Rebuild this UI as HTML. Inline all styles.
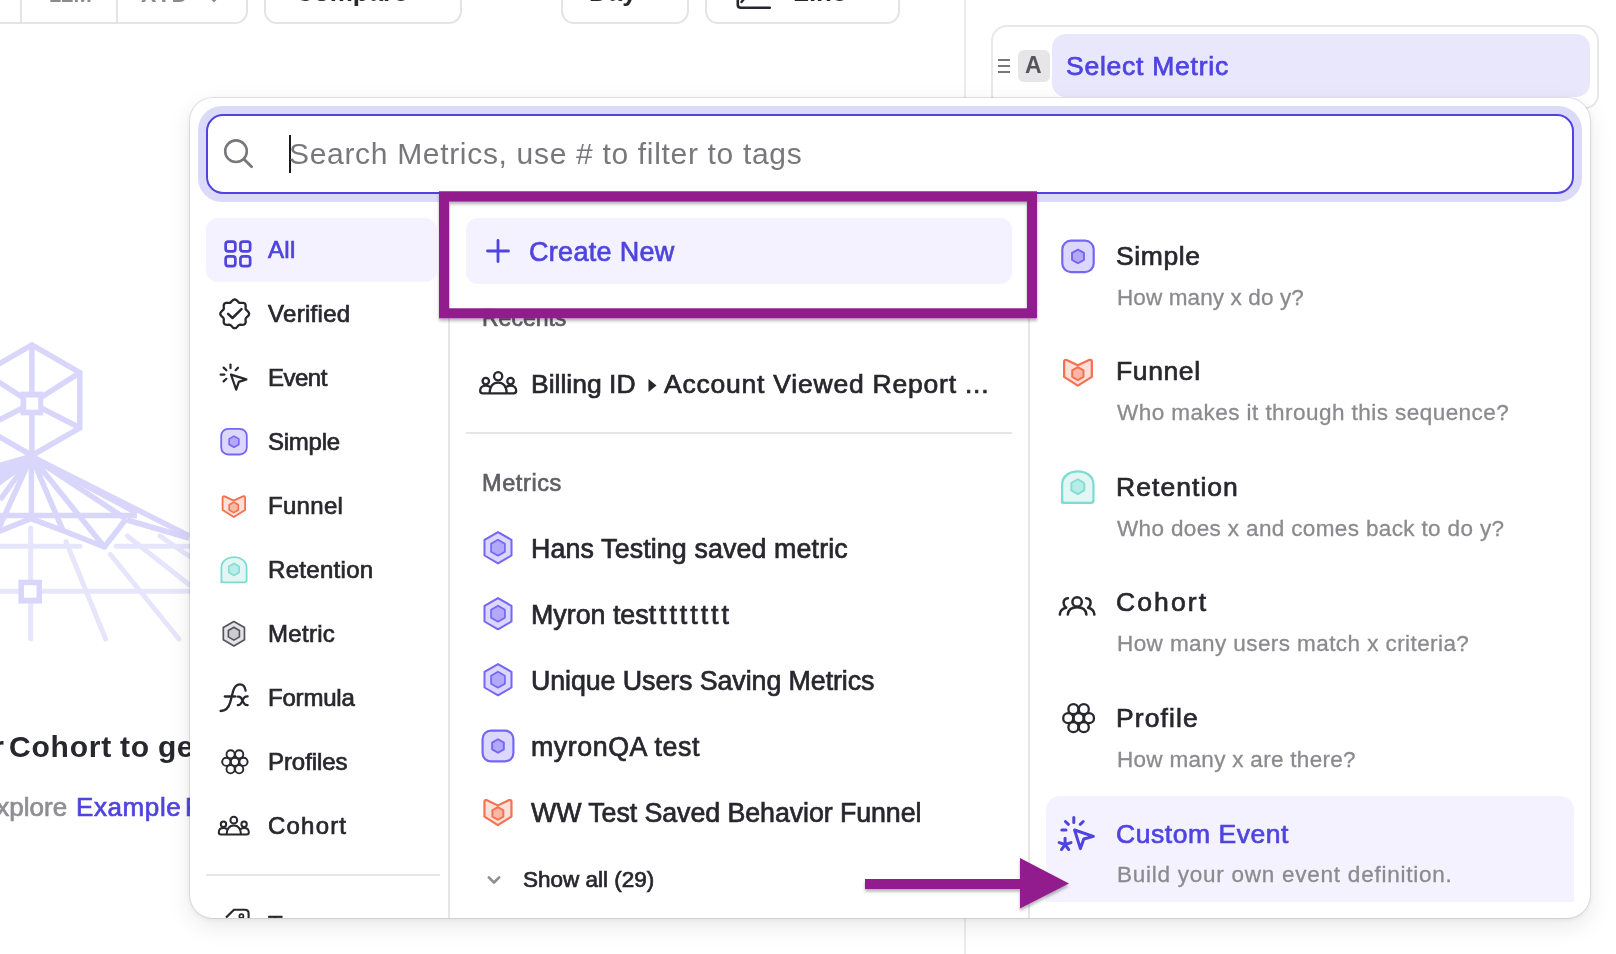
<!DOCTYPE html>
<html><head><meta charset="utf-8">
<style>
html,body{margin:0;padding:0;}
body{width:1616px;height:954px;overflow:hidden;position:relative;background:#ffffff;font-family:"Liberation Sans",sans-serif;}
.t{position:absolute;line-height:1;white-space:nowrap;will-change:transform;}
.m{-webkit-text-stroke:0.7px currentColor;}
.d{-webkit-text-stroke:0.3px currentColor;}
.abs{position:absolute;}
svg{position:absolute;left:0;top:0;overflow:visible;}
</style></head><body>

<div class="abs" style="position:absolute;border:2px solid #e4e4e6;background:#fff;box-sizing:border-box;left:-20px;top:-40px;width:268px;height:64px;border-radius:0 0 13px 13px;border-top:none;"></div>
<div class="abs" style="left:20px;top:0;width:2px;height:23px;background:#e4e4e6"></div>
<div class="abs" style="left:116px;top:0;width:2px;height:23px;background:#e4e4e6"></div>
<div class="abs" style="position:absolute;border:2px solid #e4e4e6;background:#fff;box-sizing:border-box;left:264px;top:-40px;width:198px;height:64px;border-radius:13px;"></div>
<div class="abs" style="position:absolute;border:2px solid #e4e4e6;background:#fff;box-sizing:border-box;left:561px;top:-40px;width:128px;height:64px;border-radius:13px;"></div>
<div class="abs" style="position:absolute;border:2px solid #e4e4e6;background:#fff;box-sizing:border-box;left:705px;top:-40px;width:195px;height:64px;border-radius:13px;"></div>
<div class="t" style="left:49.0px;top:-16.2px;font-size:22px;color:#8a8a8f;font-weight:700;">12M</div>
<div class="t" style="left:141.0px;top:-17.1px;font-size:23px;color:#8a8a8f;font-weight:700;letter-spacing:0.5px;">XTD</div>
<div class="t" style="left:295.0px;top:-21.5px;font-size:26px;color:#27272e;font-weight:700;">Compare</div>
<div class="t" style="left:589.0px;top:-21.5px;font-size:26px;color:#27272e;font-weight:700;">Day</div>
<div class="t" style="left:793.0px;top:-21.5px;font-size:26px;color:#27272e;font-weight:700;">Line</div>
<svg width="1616" height="954"><path d="M737.8,-4 V4.8 Q737.8,7.8 740.8,7.8 H769.8" fill="none" stroke="#27272e" stroke-width="2.6" stroke-linecap="round"/><line x1="741.5" y1="2" x2="744" y2="-1" stroke="#27272e" stroke-width="2.4" stroke-linecap="round"/><polyline points="211,-2 214,1 217,-2" fill="none" stroke="#8a8a8f" stroke-width="2"/></svg>
<div class="abs" style="left:964px;top:0;width:2px;height:954px;background:#ececee"></div>
<div class="abs" style="left:991px;top:25px;width:608px;height:84px;border:2px solid #e8e8ea;border-radius:16px 16px 14px 14px;box-sizing:border-box;background:#fff;"></div>
<div class="abs" style="left:1052px;top:34px;width:538px;height:63px;border-radius:14px;background:#e9e7fc;"></div>
<div class="abs" style="left:998px;top:59px;width:12px;height:2px;background:#77777c"></div><div class="abs" style="left:998px;top:65px;width:12px;height:2px;background:#77777c"></div><div class="abs" style="left:998px;top:71px;width:12px;height:2px;background:#77777c"></div>
<div class="abs" style="left:1018px;top:50px;width:32px;height:32px;border-radius:6px;background:#e6e6e8;"></div>
<div class="t" style="left:1024.5px;top:54.0px;font-size:23px;color:#55555a;font-weight:700;">A</div>
<div class="t" style="left:1066.0px;top:52.6px;font-size:26.5px;color:#4f44e0;font-weight:400;letter-spacing:0.75px;-webkit-text-stroke:0.75px currentColor;">Select Metric</div>
<svg width="1616" height="954" viewBox="0 0 1616 954"><polygon points="31.9,344.9 79.8,372.6 79.8,427.8 31.9,455.5 -16.0,427.8 -16.0,372.5" fill="none" stroke="#d9d6fb" stroke-width="5.5" stroke-linejoin="miter"/><line x1="31.9" y1="403.2" x2="31.9" y2="344.9" stroke="#d9d6fb" stroke-width="5.5"/><line x1="31.9" y1="403.2" x2="79.8" y2="372.6" stroke="#d9d6fb" stroke-width="5.5"/><line x1="31.9" y1="403.2" x2="79.8" y2="427.8" stroke="#d9d6fb" stroke-width="5.5"/><line x1="31.9" y1="403.2" x2="31.9" y2="455.5" stroke="#d9d6fb" stroke-width="5.5"/><line x1="31.9" y1="403.2" x2="-16.0" y2="427.8" stroke="#d9d6fb" stroke-width="5.5"/><line x1="31.9" y1="403.2" x2="-16.0" y2="372.5" stroke="#d9d6fb" stroke-width="5.5"/><rect x="20.5" y="391.6" width="22.7" height="23.8" fill="#d9d6fb"/><rect x="26.2" y="397.6" width="12" height="12" fill="#fff"/><line x1="31.4" y1="456.5" x2="188.7" y2="535.6" stroke="#d9d6fb" stroke-width="5.5"/><line x1="31.4" y1="456.5" x2="137" y2="513" stroke="#d9d6fb" stroke-width="5.5"/><line x1="31.4" y1="456.5" x2="126" y2="519" stroke="#d9d6fb" stroke-width="5.5"/><line x1="31.4" y1="456.5" x2="104.4" y2="547" stroke="#d9d6fb" stroke-width="5.5"/><line x1="31.4" y1="456.5" x2="63" y2="530.6" stroke="#d9d6fb" stroke-width="5.5"/><line x1="31.4" y1="456.5" x2="31.4" y2="515.5" stroke="#d9d6fb" stroke-width="5.5"/><line x1="31.4" y1="456.5" x2="-2" y2="530" stroke="#d9d6fb" stroke-width="5.5"/><line x1="31.4" y1="456.5" x2="0" y2="500" stroke="#d9d6fb" stroke-width="5.5"/><polygon points="31.4,453.5 35.4,459.5 -2,487 -2,463" fill="#d9d6fb"/><line x1="0" y1="515.5" x2="137" y2="515.5" stroke="#d9d6fb" stroke-width="5.5"/><polyline points="-5,533 30.8,518.6 63,530.6 104.4,547 126,519" fill="none" stroke="#d9d6fb" stroke-width="5.5" stroke-linejoin="round"/><line x1="127" y1="520" x2="189" y2="538" stroke="#d9d6fb" stroke-width="5.5"/><line x1="0" y1="546.3" x2="80" y2="546.3" stroke="#e7e5fc" stroke-width="5" stroke-linecap="round"/><line x1="116" y1="546.3" x2="189" y2="546.3" stroke="#e7e5fc" stroke-width="5" stroke-linecap="round"/><line x1="0" y1="591.3" x2="189" y2="591.3" stroke="#e7e5fc" stroke-width="5" stroke-linecap="round"/><line x1="30.7" y1="528" x2="30.7" y2="639" stroke="#e7e5fc" stroke-width="5" stroke-linecap="round"/><line x1="66" y1="541.6" x2="105.6" y2="639" stroke="#e7e5fc" stroke-width="5" stroke-linecap="round"/><line x1="110.4" y1="554.5" x2="179" y2="639" stroke="#e7e5fc" stroke-width="5" stroke-linecap="round"/><line x1="127.4" y1="536" x2="189" y2="584.5" stroke="#e7e5fc" stroke-width="5" stroke-linecap="round"/><line x1="160" y1="536" x2="189" y2="556" stroke="#e7e5fc" stroke-width="5" stroke-linecap="round"/><rect x="18.4" y="579.7" width="23.6" height="23.9" fill="#d9d6fb"/><rect x="24" y="585.2" width="12.5" height="12.5" fill="#fff"/></svg>
<div class="t" style="left:-26.0px;top:732.3px;font-size:30px;color:#27272e;font-weight:700;">or</div>
<div class="t" style="left:9.0px;top:732.3px;font-size:30px;color:#27272e;font-weight:700;letter-spacing:0.8px;">Cohort</div>
<div class="t" style="left:120.0px;top:732.3px;font-size:30px;color:#27272e;font-weight:700;letter-spacing:0.8px;">to</div>
<div class="t" style="left:158.0px;top:732.3px;font-size:30px;color:#27272e;font-weight:700;letter-spacing:0.5px;">get</div>
<div class="t m" style="left:-21.0px;top:794.0px;font-size:26px;color:#8e8e93;font-weight:400;">Explore</div>
<div class="t m" style="left:75.5px;top:794.0px;font-size:26px;color:#4f44e0;font-weight:400;letter-spacing:0.6px;">Example</div>
<div class="t m" style="left:185.0px;top:794.0px;font-size:26px;color:#4f44e0;font-weight:400;">Reports</div>
<div class="abs" style="left:190px;top:98px;width:1400px;height:820px;border-radius:23px;background:#fff;box-shadow:0 0 0 1px rgba(0,0,0,0.09),0 1px 6px rgba(0,0,0,0.08),0 8px 24px rgba(0,0,0,0.09);overflow:hidden;">
<div class="abs" style="left:8px;top:8px;width:1384px;height:96px;border-radius:24px;background:#dcdaf9;"></div>
<div class="abs" style="left:16px;top:16px;width:1368px;height:80px;border-radius:17px;background:#fff;border:2px solid #4f44e0;box-sizing:border-box;"></div>
<div class="abs" style="left:99px;top:37px;width:2px;height:38px;background:#1a1a1a;"></div>
<div class="t" style="left:98.5px;top:41.3px;font-size:30px;color:#77777c;font-weight:400;letter-spacing:0.68px;">Search Metrics, use # to filter to tags</div>
<div class="abs" style="left:16px;top:120px;width:231px;height:64px;border-radius:12px;background:#f3f2fe;"></div>
<div class="t m" style="left:77.5px;top:140.0px;font-size:24px;color:#4f44e0;font-weight:400;letter-spacing:0.3px;">All</div>
<div class="t m" style="left:77.5px;top:204.0px;font-size:24px;color:#27272e;font-weight:400;letter-spacing:0.3px;">Verified</div>
<div class="t m" style="left:77.5px;top:268.0px;font-size:24px;color:#27272e;font-weight:400;letter-spacing:-0.5px;">Event</div>
<div class="t m" style="left:77.5px;top:332.0px;font-size:24px;color:#27272e;font-weight:400;letter-spacing:-0.25px;">Simple</div>
<div class="t m" style="left:77.5px;top:396.0px;font-size:24px;color:#27272e;font-weight:400;letter-spacing:0.3px;">Funnel</div>
<div class="t m" style="left:77.5px;top:460.0px;font-size:24px;color:#27272e;font-weight:400;letter-spacing:0.3px;">Retention</div>
<div class="t m" style="left:77.5px;top:524.0px;font-size:24px;color:#27272e;font-weight:400;letter-spacing:0.3px;">Metric</div>
<div class="t m" style="left:77.5px;top:588.0px;font-size:24px;color:#27272e;font-weight:400;letter-spacing:-0.2px;">Formula</div>
<div class="t m" style="left:77.5px;top:652.0px;font-size:24px;color:#27272e;font-weight:400;letter-spacing:-0.07px;">Profiles</div>
<div class="t m" style="left:77.5px;top:716.0px;font-size:24px;color:#27272e;font-weight:400;letter-spacing:1.2px;">Cohort</div>
<div class="t m" style="left:77.5px;top:814.7px;font-size:24px;color:#27272e;font-weight:400;">Tags</div>
<div class="abs" style="left:16px;top:776px;width:234px;height:2px;background:#e6e6e8;"></div>
<div class="abs" style="left:258px;top:106px;width:2px;height:820px;background:#e6e6e8;"></div>
<div class="abs" style="left:276px;top:120px;width:546px;height:66px;border-radius:12px;background:#f3f2fe;"></div>
<div class="t m" style="left:339.0px;top:140.8px;font-size:27px;color:#4f44e0;font-weight:400;letter-spacing:0.3px;">Create New</div>
<div class="t m" style="left:292.0px;top:208.8px;font-size:23px;color:#5f5f66;font-weight:400;">Recents</div>
<div class="t m" style="left:341.0px;top:273.0px;font-size:26.5px;color:#27272e;font-weight:400;">Billing ID</div>
<div class="t m" style="left:474.0px;top:273.0px;font-size:26.5px;color:#27272e;font-weight:400;letter-spacing:0.78px;">Account Viewed Report ...</div>
<div class="abs" style="left:276px;top:334px;width:546px;height:2px;background:#e6e6e8;"></div>
<div class="t m" style="left:292.0px;top:373.6px;font-size:23.5px;color:#5f5f66;font-weight:400;letter-spacing:0.6px;">Metrics</div>
<div class="t m" style="left:341.0px;top:437.9px;font-size:26.8px;color:#27272e;font-weight:400;letter-spacing:0.12px;">Hans Testing saved metric</div>
<div class="t m" style="left:341.0px;top:503.8px;font-size:26.8px;color:#27272e;font-weight:400;letter-spacing:0px;">Myron tes<span style="letter-spacing:2.95px">tttttttt</span></div>
<div class="t m" style="left:341.0px;top:569.7px;font-size:26.8px;color:#27272e;font-weight:400;letter-spacing:-0.08px;">Unique Users Saving Metrics</div>
<div class="t m" style="left:341.0px;top:635.6px;font-size:26.8px;color:#27272e;font-weight:400;letter-spacing:0.55px;">myronQA test</div>
<div class="t m" style="left:341.0px;top:701.5px;font-size:26.8px;color:#27272e;font-weight:400;letter-spacing:-0.08px;">WW Test Saved Behavior Funnel</div>
<div class="t m" style="left:333.0px;top:771.2px;font-size:22.5px;color:#27272e;font-weight:400;">Show all (29)</div>
<div class="abs" style="left:838px;top:106px;width:2px;height:820px;background:#e6e6e8;"></div>
<div class="abs" style="left:856px;top:698px;width:528px;height:106px;border-radius:14px 14px 0 0;background:#f3f2fe;"></div>
<div class="t m" style="left:926.0px;top:144.7px;font-size:26.5px;color:#27272e;font-weight:400;letter-spacing:0.6px;">Simple</div>
<div class="t d" style="left:927.0px;top:188.5px;font-size:22.5px;color:#8a8a8f;font-weight:400;letter-spacing:0.12px;">How many x do y?</div>
<div class="t m" style="left:926.0px;top:260.2px;font-size:26.5px;color:#27272e;font-weight:400;letter-spacing:0.6px;">Funnel</div>
<div class="t d" style="left:927.0px;top:304.1px;font-size:22.5px;color:#8a8a8f;font-weight:400;letter-spacing:0.45px;">Who makes it through this sequence?</div>
<div class="t m" style="left:926.0px;top:375.8px;font-size:26.5px;color:#27272e;font-weight:400;letter-spacing:1.05px;">Retention</div>
<div class="t d" style="left:927.0px;top:419.7px;font-size:22.5px;color:#8a8a8f;font-weight:400;letter-spacing:0.36px;">Who does x and comes back to do y?</div>
<div class="t m" style="left:926.0px;top:491.4px;font-size:26.5px;color:#27272e;font-weight:400;letter-spacing:2.1px;">Cohort</div>
<div class="t d" style="left:927.0px;top:535.3px;font-size:22.5px;color:#8a8a8f;font-weight:400;letter-spacing:0.42px;">How many users match x criteria?</div>
<div class="t m" style="left:926.0px;top:607.0px;font-size:26.5px;color:#27272e;font-weight:400;letter-spacing:1.1px;">Profile</div>
<div class="t d" style="left:927.0px;top:650.9px;font-size:22.5px;color:#8a8a8f;font-weight:400;letter-spacing:0.3px;">How many x are there?</div>
<div class="t m" style="left:926.0px;top:722.6px;font-size:26.5px;color:#4f44e0;font-weight:400;letter-spacing:0.55px;">Custom Event</div>
<div class="t d" style="left:927.0px;top:766.4px;font-size:22.5px;color:#8a8a8f;font-weight:400;letter-spacing:0.75px;">Build your own event definition.</div>
<svg width="1400" height="820" viewBox="190 98 1400 820" style="left:0;top:0"><circle cx="236" cy="151.2" r="10.8" fill="none" stroke="#77777c" stroke-width="2.6"/><line x1="244" y1="159.2" x2="251.6" y2="166.8" stroke="#77777c" stroke-width="2.8" stroke-linecap="round"/><rect x="225.65" y="241.65" width="9.7" height="9.7" rx="2.6" fill="none" stroke="#4f44e0" stroke-width="2.7"/><rect x="225.65" y="256.45" width="9.7" height="9.7" rx="2.6" fill="none" stroke="#4f44e0" stroke-width="2.7"/><rect x="240.45" y="241.65" width="9.7" height="9.7" rx="2.6" fill="none" stroke="#4f44e0" stroke-width="2.7"/><rect x="240.45" y="256.45" width="9.7" height="9.7" rx="2.6" fill="none" stroke="#4f44e0" stroke-width="2.7"/><path d="M234.70,299.35 L236.08,299.78 L237.28,300.85 L238.28,302.01 L239.27,302.76 L240.51,302.94 L242.03,302.82 L243.63,302.91 L244.92,303.58 L245.59,304.87 L245.68,306.47 L245.56,307.99 L245.74,309.23 L246.49,310.22 L247.65,311.22 L248.72,312.42 L249.15,313.80 L248.72,315.18 L247.65,316.38 L246.49,317.38 L245.74,318.37 L245.56,319.61 L245.68,321.13 L245.59,322.73 L244.92,324.02 L243.63,324.69 L242.03,324.78 L240.51,324.66 L239.27,324.84 L238.28,325.59 L237.28,326.75 L236.08,327.82 L234.70,328.25 L233.32,327.82 L232.12,326.75 L231.12,325.59 L230.13,324.84 L228.89,324.66 L227.37,324.78 L225.77,324.69 L224.48,324.02 L223.81,322.73 L223.72,321.13 L223.84,319.61 L223.66,318.37 L222.91,317.38 L221.75,316.38 L220.68,315.18 L220.25,313.80 L220.68,312.42 L221.75,311.22 L222.91,310.22 L223.66,309.23 L223.84,307.99 L223.72,306.47 L223.81,304.87 L224.48,303.58 L225.77,302.91 L227.37,302.82 L228.89,302.94 L230.13,302.76 L231.12,302.01 L232.12,300.85 L233.32,299.78 L234.70,299.35 Z" fill="none" stroke="#27272e" stroke-width="2.3" stroke-linejoin="round"/><path d="M228.10,313.80 L232.50,318.00 L241.50,309.20" fill="none" stroke="#27272e" stroke-width="2.5" stroke-linecap="round" stroke-linejoin="round"/><path d="M231.00,374.60 L246.40,379.40 L238.80,381.90 L236.20,389.60 Z" fill="none" stroke="#27272e" stroke-width="2.2" stroke-linejoin="round"/><line x1="230.50" y1="364.60" x2="230.50" y2="368.20" stroke="#27272e" stroke-width="2.2" stroke-linecap="round"/><line x1="223.60" y1="367.60" x2="226.40" y2="370.30" stroke="#27272e" stroke-width="2.2" stroke-linecap="round"/><line x1="238.00" y1="367.70" x2="235.60" y2="370.20" stroke="#27272e" stroke-width="2.2" stroke-linecap="round"/><line x1="220.60" y1="374.60" x2="224.40" y2="374.60" stroke="#27272e" stroke-width="2.2" stroke-linecap="round"/><line x1="226.40" y1="378.80" x2="223.60" y2="381.40" stroke="#27272e" stroke-width="2.2" stroke-linecap="round"/><rect x="221.20" y="428.90" width="25.60" height="25.60" rx="7.00" fill="#dcd8fd" stroke="#7566f5" stroke-width="1.80"/><polygon points="234.00,436.10 238.85,438.90 238.85,444.50 234.00,447.30 229.15,444.50 229.15,438.90" fill="#b3a8f9" stroke="#7566f5" stroke-width="1.60" stroke-linejoin="round"/><path d="M222.61,497.63 Q222.61,495.81 224.64,496.31 L233.75,500.67 L242.86,496.31 Q245.09,495.81 245.09,497.63 L245.09,509.98 L233.75,517.06 L222.61,509.98 Z" fill="#fde0d9" stroke="#f4714f" stroke-width="1.82" stroke-linejoin="round"/><polygon points="233.75,502.08 238.31,504.72 238.31,509.98 233.75,512.61 229.19,509.98 229.19,504.72" fill="#fbb7a6" stroke="#f4714f" stroke-width="1.62" stroke-linejoin="round"/><path d="M221.40,582.40 L221.40,567.80 C221.40,560.80 227.50,557.20 234.00,557.20 C240.50,557.20 246.60,560.80 246.60,567.80 L246.60,580.30 Q246.60,582.40 244.50,582.40 L223.50,582.40 Q221.40,582.40 221.40,580.30 Z" fill="#e2f7f4" stroke="#7adcd3" stroke-width="1.80" stroke-linejoin="round"/><polygon points="234.00,563.50 239.20,566.50 239.20,572.50 234.00,575.50 228.80,572.50 228.80,566.50" fill="#b6ede7" stroke="#86ddd5" stroke-width="1.60" stroke-linejoin="round"/><polygon points="233.90,621.50 244.47,627.60 244.47,639.80 233.90,645.90 223.33,639.80 223.33,627.60" fill="#e4e4e6" stroke="#55555a" stroke-width="1.7" stroke-linejoin="round"/><polygon points="233.90,627.30 239.44,630.50 239.44,636.90 233.90,640.10 228.36,636.90 228.36,630.50" fill="#cdcdd0" stroke="#55555a" stroke-width="1.6" stroke-linejoin="round"/><path d="M220.60,711.00 C225.00,711.00 228.60,708.00 230.20,702.40 L233.00,691.60 C234.60,686.00 237.00,684.40 239.80,684.40 C242.60,684.40 245.00,686.60 245.60,690.60" fill="none" stroke="#27272e" stroke-width="2.3" stroke-linecap="round"/><line x1="224.80" y1="696.50" x2="235.40" y2="696.50" stroke="#27272e" stroke-width="2.3" stroke-linecap="round"/><path d="M237.80,696.60 C240.40,696.20 241.40,697.60 242.40,700.20 C243.40,703.40 245.00,705.40 247.60,705.20" fill="none" stroke="#27272e" stroke-width="2.3" stroke-linecap="round"/><path d="M247.60,696.40 C245.00,696.20 243.40,698.00 242.40,700.60 C241.40,703.40 240.20,705.40 237.80,705.20" fill="none" stroke="#27272e" stroke-width="2.3" stroke-linecap="round"/><circle cx="234.90" cy="761.80" r="4.1" fill="none" stroke="#27272e" stroke-width="1.9"/><circle cx="243.50" cy="761.80" r="4.1" fill="none" stroke="#27272e" stroke-width="1.9"/><circle cx="239.20" cy="769.25" r="4.1" fill="none" stroke="#27272e" stroke-width="1.9"/><circle cx="230.60" cy="769.25" r="4.1" fill="none" stroke="#27272e" stroke-width="1.9"/><circle cx="226.30" cy="761.80" r="4.1" fill="none" stroke="#27272e" stroke-width="1.9"/><circle cx="230.60" cy="754.35" r="4.1" fill="none" stroke="#27272e" stroke-width="1.9"/><circle cx="239.20" cy="754.35" r="4.1" fill="none" stroke="#27272e" stroke-width="1.9"/><circle cx="233.80" cy="820.20" r="3.40" fill="none" stroke="#27272e" stroke-width="2.0"/><circle cx="223.50" cy="824.20" r="2.70" fill="none" stroke="#27272e" stroke-width="2.0"/><circle cx="244.10" cy="824.20" r="2.70" fill="none" stroke="#27272e" stroke-width="2.0"/><path d="M226.60,834.40 C227.00,828.00 230.00,825.60 233.80,825.60 C237.60,825.60 240.60,828.00 241.00,834.40" fill="none" stroke="#27272e" stroke-width="2.0"/><path d="M227.20,829.20 C226.00,828.40 225.00,828.00 223.50,828.00 C220.40,828.00 218.80,830.00 218.80,832.20 C218.80,833.60 219.60,834.40 221.00,834.40 L246.60,834.40 C248.00,834.40 248.80,833.60 248.80,832.20 C248.80,830.00 247.20,828.00 244.10,828.00 C242.60,828.00 241.60,828.40 240.40,829.20" fill="none" stroke="#27272e" stroke-width="2.0" stroke-linejoin="round"/><path d="M226.00,917.60 L234.00,909.80 L245.00,909.80 Q248.60,909.80 248.60,913.40 L248.60,924.60" fill="none" stroke="#27272e" stroke-width="2.1" stroke-linejoin="round"/><circle cx="241.40" cy="916.20" r="2" fill="none" stroke="#27272e" stroke-width="1.8"/><line x1="487.5" y1="251" x2="508.5" y2="251" stroke="#4f44e0" stroke-width="2.8" stroke-linecap="round"/><line x1="498" y1="240.5" x2="498" y2="261.5" stroke="#4f44e0" stroke-width="2.8" stroke-linecap="round"/><circle cx="498.16" cy="376.24" r="4.08" fill="none" stroke="#27272e" stroke-width="2.3"/><circle cx="485.80" cy="381.04" r="3.24" fill="none" stroke="#27272e" stroke-width="2.3"/><circle cx="510.52" cy="381.04" r="3.24" fill="none" stroke="#27272e" stroke-width="2.3"/><path d="M489.52,393.28 C490.00,385.60 493.60,382.72 498.16,382.72 C502.72,382.72 506.32,385.60 506.80,393.28" fill="none" stroke="#27272e" stroke-width="2.3"/><path d="M490.24,387.04 C488.80,386.08 487.60,385.60 485.80,385.60 C482.08,385.60 480.16,388.00 480.16,390.64 C480.16,392.32 481.12,393.28 482.80,393.28 L513.52,393.28 C515.20,393.28 516.16,392.32 516.16,390.64 C516.16,388.00 514.24,385.60 510.52,385.60 C508.72,385.60 507.52,386.08 506.08,387.04" fill="none" stroke="#27272e" stroke-width="2.3" stroke-linejoin="round"/><polygon points="648.5,379 656.5,385.5 648.5,392" fill="#27272e"/><polygon points="498.00,532.10 511.51,539.90 511.51,555.50 498.00,563.30 484.49,555.50 484.49,539.90" fill="#dcd8fd" stroke="#7566f5" stroke-width="2.00" stroke-linejoin="round"/><polygon points="498.00,539.70 504.93,543.70 504.93,551.70 498.00,555.70 491.07,551.70 491.07,543.70" fill="#b3a8f9" stroke="#7566f5" stroke-width="1.70" stroke-linejoin="round"/><polygon points="498.00,598.10 511.51,605.90 511.51,621.50 498.00,629.30 484.49,621.50 484.49,605.90" fill="#dcd8fd" stroke="#7566f5" stroke-width="2.00" stroke-linejoin="round"/><polygon points="498.00,605.70 504.93,609.70 504.93,617.70 498.00,621.70 491.07,617.70 491.07,609.70" fill="#b3a8f9" stroke="#7566f5" stroke-width="1.70" stroke-linejoin="round"/><polygon points="498.00,664.10 511.51,671.90 511.51,687.50 498.00,695.30 484.49,687.50 484.49,671.90" fill="#dcd8fd" stroke="#7566f5" stroke-width="2.00" stroke-linejoin="round"/><polygon points="498.00,671.70 504.93,675.70 504.93,683.70 498.00,687.70 491.07,683.70 491.07,675.70" fill="#b3a8f9" stroke="#7566f5" stroke-width="1.70" stroke-linejoin="round"/><rect x="482.58" y="730.58" width="30.83" height="30.83" rx="8.43" fill="#dcd8fd" stroke="#7566f5" stroke-width="2.17"/><polygon points="498.00,739.26 503.84,742.63 503.84,749.37 498.00,752.74 492.16,749.37 492.16,742.63" fill="#b3a8f9" stroke="#7566f5" stroke-width="1.93" stroke-linejoin="round"/><path d="M484.46,801.72 Q484.46,799.53 486.89,800.14 L497.84,805.37 L508.79,800.14 Q511.46,799.53 511.46,801.72 L511.46,816.56 L497.84,825.07 L484.46,816.56 Z" fill="#fde0d9" stroke="#f4714f" stroke-width="2.19" stroke-linejoin="round"/><polygon points="497.84,807.07 503.32,810.23 503.32,816.56 497.84,819.72 492.36,816.56 492.36,810.23" fill="#fbb7a6" stroke="#f4714f" stroke-width="1.95" stroke-linejoin="round"/><polyline points="488.8,877.3 494,882.5 499.2,877.3" fill="none" stroke="#8e8e93" stroke-width="2.6" stroke-linecap="round" stroke-linejoin="round"/><rect x="1062.30" y="240.70" width="31.39" height="31.39" rx="8.58" fill="#dcd8fd" stroke="#7566f5" stroke-width="2.21"/><polygon points="1078.00,249.53 1083.95,252.97 1083.95,259.83 1078.00,263.27 1072.05,259.83 1072.05,252.97" fill="#b3a8f9" stroke="#7566f5" stroke-width="1.96" stroke-linejoin="round"/><path d="M1064.10,361.60 Q1064.10,359.35 1066.60,359.97 L1077.84,365.34 L1089.08,359.97 Q1091.83,359.35 1091.83,361.60 L1091.83,376.84 L1077.84,385.58 L1064.10,376.84 Z" fill="#fde0d9" stroke="#f4714f" stroke-width="2.25" stroke-linejoin="round"/><polygon points="1077.84,367.09 1083.46,370.34 1083.46,376.84 1077.84,380.08 1072.21,376.84 1072.21,370.34" fill="#fbb7a6" stroke="#f4714f" stroke-width="2.00" stroke-linejoin="round"/><path d="M1062.12,502.78 L1062.12,484.61 C1062.12,475.90 1069.71,471.42 1077.80,471.42 C1085.89,471.42 1093.48,475.90 1093.48,484.61 L1093.48,500.17 Q1093.48,502.78 1090.87,502.78 L1064.73,502.78 Q1062.12,502.78 1062.12,500.17 Z" fill="#e2f7f4" stroke="#7adcd3" stroke-width="2.24" stroke-linejoin="round"/><polygon points="1077.80,479.26 1084.27,482.99 1084.27,490.46 1077.80,494.19 1071.33,490.46 1071.33,482.99" fill="#b6ede7" stroke="#86ddd5" stroke-width="1.99" stroke-linejoin="round"/><circle cx="1077.10" cy="601.90" r="4.7" fill="none" stroke="#27272e" stroke-width="2.5"/><path d="M1067.80,614.60 C1068.20,609.60 1072.00,607.20 1077.10,607.20 C1082.20,607.20 1086.00,609.60 1086.40,614.60" fill="none" stroke="#27272e" stroke-width="2.5" stroke-linecap="round"/><path d="M1068.00,598.20 C1065.00,598.40 1063.60,600.60 1063.60,603.00 C1063.60,605.20 1064.60,606.60 1066.20,607.80 C1062.00,608.60 1060.00,611.40 1059.80,614.60" fill="none" stroke="#27272e" stroke-width="2.5" stroke-linecap="round" stroke-linejoin="round"/><path d="M1086.20,598.20 C1089.20,598.40 1090.60,600.60 1090.60,603.00 C1090.60,605.20 1089.60,606.60 1088.00,607.80 C1092.20,608.60 1094.20,611.40 1094.40,614.60" fill="none" stroke="#27272e" stroke-width="2.5" stroke-linecap="round" stroke-linejoin="round"/><circle cx="1078.60" cy="718.20" r="5.0" fill="none" stroke="#27272e" stroke-width="2.3"/><circle cx="1089.00" cy="718.20" r="5.0" fill="none" stroke="#27272e" stroke-width="2.3"/><circle cx="1083.80" cy="727.21" r="5.0" fill="none" stroke="#27272e" stroke-width="2.3"/><circle cx="1073.40" cy="727.21" r="5.0" fill="none" stroke="#27272e" stroke-width="2.3"/><circle cx="1068.20" cy="718.20" r="5.0" fill="none" stroke="#27272e" stroke-width="2.3"/><circle cx="1073.40" cy="709.19" r="5.0" fill="none" stroke="#27272e" stroke-width="2.3"/><circle cx="1083.80" cy="709.19" r="5.0" fill="none" stroke="#27272e" stroke-width="2.3"/><path d="M1074.60,830.00 L1093.40,836.40 L1083.80,839.00 L1080.40,848.60 Z" fill="none" stroke="#4f44e0" stroke-width="3" stroke-linejoin="round"/><line x1="1073.80" y1="817.60" x2="1073.80" y2="822.60" stroke="#4f44e0" stroke-width="3" stroke-linecap="round"/><line x1="1065.40" y1="821.50" x2="1068.40" y2="824.30" stroke="#4f44e0" stroke-width="3" stroke-linecap="round"/><line x1="1083.20" y1="821.50" x2="1080.20" y2="824.30" stroke="#4f44e0" stroke-width="3" stroke-linecap="round"/><line x1="1061.80" y1="830.00" x2="1066.00" y2="830.00" stroke="#4f44e0" stroke-width="3" stroke-linecap="round"/><line x1="1065.10" y1="844.50" x2="1065.10" y2="838.30" stroke="#4f44e0" stroke-width="3" stroke-linecap="round"/><line x1="1065.10" y1="844.50" x2="1071.00" y2="842.58" stroke="#4f44e0" stroke-width="3" stroke-linecap="round"/><line x1="1065.10" y1="844.50" x2="1068.74" y2="849.52" stroke="#4f44e0" stroke-width="3" stroke-linecap="round"/><line x1="1065.10" y1="844.50" x2="1061.46" y2="849.52" stroke="#4f44e0" stroke-width="3" stroke-linecap="round"/><line x1="1065.10" y1="844.50" x2="1059.20" y2="842.58" stroke="#4f44e0" stroke-width="3" stroke-linecap="round"/></svg>
</div>
<svg width="1616" height="954" viewBox="0 0 1616 954"><defs><filter id="sh" x="-10%" y="-10%" width="120%" height="130%"><feDropShadow dx="0" dy="2.5" stdDeviation="1.6" flood-color="#000" flood-opacity="0.3"/></filter></defs><g filter="url(#sh)"><path d="M439,191.2 H1037 V318.2 H439 Z M449,201.4 V308.2 H1027 V201.4 Z" fill="#921f8e" fill-rule="evenodd"/><rect x="865" y="879" width="156" height="10" fill="#921f8e"/><polygon points="1020,858 1069,883.5 1020,908.5" fill="#921f8e"/></g></svg>
</body></html>
